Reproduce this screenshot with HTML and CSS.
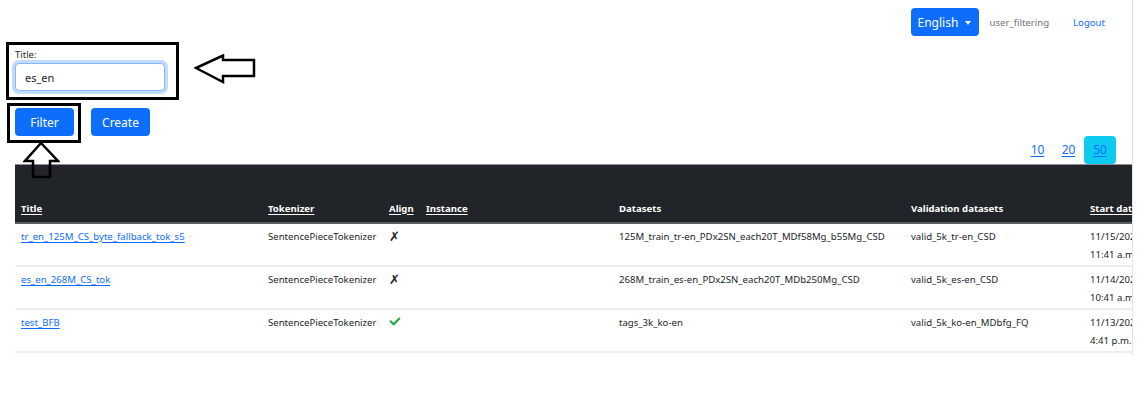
FILE: index.html
```html
<!DOCTYPE html>
<html lang="en">
<head>
<meta charset="UTF-8">
<meta name="viewport" content="width=device-width, initial-scale=1.0">
<title>Trainings</title>
<link rel="stylesheet" href="styles.css">
</head>
<body>

<div class="page">
    <nav class="topbar">
        <button class="btn lang">English <span class="caret"></span></button>
        <span class="user">user_filtering</span>
        <a class="logout" href="#">Logout</a>
    </nav>

    <form class="filters">
        <div class="filter-row">
            <div class="mark title-mark">
                <label for="title">Title:</label>
                <input type="text" id="title" value="es_en">
            </div>
            <svg class="arrow-left" width="62" height="30" viewBox="0 0 62 30">
                <polygon points="2,14 29,1.5 29,6 60,6 60,22 29,22 29,28" fill="none" stroke="#000" stroke-width="2.5"/>
            </svg>
        </div>
        <div class="button-row">
            <div class="mark filter-mark">
                <button type="button" class="btn">Filter</button>
            </div>
            <button type="button" class="btn create">Create</button>
        </div>
    </form>

    <div class="pager">
        <a href="#">10</a>
        <a href="#">20</a>
        <a href="#" class="active">50</a>
    </div>

    <table class="trainings">
        <colgroup>
            <col style="width: 247px">
            <col style="width: 121px">
            <col style="width: 37px">
            <col style="width: 193px">
            <col style="width: 292px">
            <col style="width: 179px">
            <col style="width: 200px">
        </colgroup>
        <thead>
            <tr>
                <th><a href="#">Title</a></th>
                <th><a href="#">Tokenizer</a></th>
                <th><a href="#">Align</a></th>
                <th><a href="#">Instance</a></th>
                <th>Datasets</th>
                <th>Validation datasets</th>
                <th><a href="#">Start date</a></th>
            </tr>
        </thead>
        <tbody>
            <tr>
                <td><a href="#">tr_en_125M_CS_byte_fallback_tok_s5</a></td>
                <td>SentencePieceTokenizer</td>
                <td><span class="no">&#x2717;</span></td>
                <td></td>
                <td>125M_train_tr-en_PDx2SN_each20T_MDf58Mg_b55Mg_CSD</td>
                <td>valid_5k_tr-en_CSD</td>
                <td>11/15/2023,<br>11:41 a.m.</td>
            </tr>
            <tr>
                <td><a href="#">es_en_268M_CS_tok</a></td>
                <td>SentencePieceTokenizer</td>
                <td><span class="no">&#x2717;</span></td>
                <td></td>
                <td>268M_train_es-en_PDx2SN_each20T_MDb250Mg_CSD</td>
                <td>valid_5k_es-en_CSD</td>
                <td>11/14/2023,<br>10:41 a.m.</td>
            </tr>
            <tr>
                <td><a href="#">test_BFB</a></td>
                <td>SentencePieceTokenizer</td>
                <td>
                    <svg class="yes" width="12" height="11" viewBox="0 0 512 512">
                        <path d="M173.9 439.4l-166.4-166.4c-10-10-10-26.2 0-36.2l36.2-36.2c10-10 26.2-10 36.2 0L192 312.7 432.1 72.6c10-10 26.2-10 36.2 0l36.2 36.2c10 10 10 26.2 0 36.2l-294.4 294.4c-10 10-26.2 10-36.2 0z" fill="#28a745"/>
                    </svg>
                </td>
                <td></td>
                <td>tags_3k_ko-en</td>
                <td>valid_5k_ko-en_MDbfg_FQ</td>
                <td>11/13/2023,<br>4:41 p.m.</td>
            </tr>
        </tbody>
    </table>

    <svg class="arrow-up" width="37" height="38" viewBox="0 0 37 38">
        <polygon points="18,2 35,20 27,20 27,36 10,36 10,20 2,20" fill="none" stroke="#000" stroke-width="2.5"/>
    </svg>
</div>

</body>
</html>
```

FILE: styles.css
```css
body {
    margin: 0;
    font-family: "Noto Sans", sans-serif;
    color: #212529;
    background-color: #fff;
}

a {
    color: #0d6efd;
    text-underline-offset: 2px;
}

.page {
    position: relative;
    width: 1133px;
    height: 356px;
    box-sizing: border-box;
    border-right: 1px solid #e6e6e6;
    overflow: hidden;
}

.btn {
    height: 28px;
    padding: 0 10px;
    border: none;
    border-radius: 4px;
    background-color: #0d6efd;
    color: #fff;
    font-family: inherit;
    font-size: 12px;
    cursor: pointer;
}

.topbar {
    display: flex;
    justify-content: flex-end;
    align-items: center;
    padding: 8px 27px 0 0;
    font-size: 9.6px;
}

.lang {
    width: 68px;
    padding: 0;
}

.caret {
    display: inline-block;
    margin-left: 4px;
    vertical-align: 2px;
    border-top: 4px solid #fff;
    border-left: 3.5px solid transparent;
    border-right: 3.5px solid transparent;
}

.user {
    margin-left: 11px;
    color: #6c757d;
}

.logout {
    margin-left: 24px;
    text-decoration: none;
}

.filters {
    padding: 6px 0 0 6px;
}

.filter-row {
    display: flex;
    align-items: flex-start;
}

.mark {
    border: 3px solid #000;
}

.title-mark {
    padding: 4px 11px 6px 6px;
}

.title-mark label {
    display: block;
    font-size: 9.5px;
    line-height: 12px;
    margin-bottom: 2px;
}

.title-mark input {
    box-sizing: border-box;
    width: 150px;
    height: 28px;
    padding: 0 9px;
    border: 1px solid #86b7fe;
    border-radius: 4px;
    box-shadow: 0 0 0 3px rgba(13, 110, 253, 0.25);
    font-family: inherit;
    font-size: 11px;
    color: #212529;
    outline: none;
}

.arrow-left {
    margin: 12px 0 0 15px;
}

.button-row {
    display: flex;
    align-items: flex-start;
    margin-top: 3px;
}

.filter-mark {
    margin-left: 1px;
    padding: 2px 4px 4px 5px;
}

.filter-mark .btn,
.create {
    width: 59px;
    padding: 0;
}

.create {
    margin: 5px 0 0 10px;
}

.pager {
    display: flex;
    justify-content: flex-end;
    margin-top: -7px;
    padding-right: 16px;
}

.pager a {
    width: 31px;
    height: 28px;
    line-height: 28px;
    text-align: center;
    font-size: 12px;
    border-radius: 4px;
}

.pager a.active {
    width: 32px;
    background-color: #0dcaf0;
}

.trainings {
    margin-left: 15px;
    width: 1269px;
    table-layout: fixed;
    border-collapse: collapse;
    font-size: 9.6px;
    line-height: 18px;
}

.trainings th,
.trainings td {
    padding: 4px 6px;
    text-align: left;
    white-space: nowrap;
    overflow: hidden;
}

.trainings thead tr {
    height: 58px;
    background-color: #212529;
}

.trainings th {
    vertical-align: bottom;
    color: #fff;
    font-weight: bold;
    border-top: 1px solid #8e9195;
    border-bottom: 2px solid #5c5f63;
}

.trainings th a {
    color: #fff;
}

.trainings tbody tr {
    height: 42px;
}

.trainings td {
    padding: 4px 6px 1px;
    vertical-align: top;
    border-bottom: 2px solid #eceef0;
}

.no {
    font-family: "DejaVu Sans", sans-serif;
    font-size: 13px;
    line-height: 18px;
}

.yes {
    vertical-align: -1px;
}

.arrow-up {
    position: absolute;
    left: 23px;
    top: 141px;
}
```
